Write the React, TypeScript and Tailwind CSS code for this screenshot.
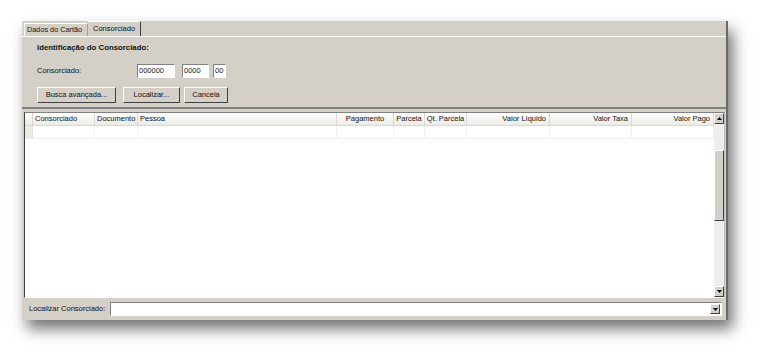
import React from "react";

type Col = { label: string; w: number; align: "left" | "center" | "right" };

const COLS: Col[] = [
  { label: "Consorciado", w: 62, align: "left" },
  { label: "Documento", w: 43, align: "left" },
  { label: "Pessoa", w: 199, align: "left" },
  { label: "Pagamento", w: 57, align: "center" },
  { label: "Parcela", w: 31, align: "center" },
  { label: "Qt. Parcela", w: 42, align: "center" },
  { label: "Valor Líquido", w: 83, align: "right" },
  { label: "Valor Taxa", w: 82, align: "right" },
  { label: "Valor Pago", w: 82, align: "right" },
];

const alignCls = {
  left: "justify-start pl-[2px]",
  center: "justify-center",
  right: "justify-end pr-[3px]",
};

const raised =
  "border border-t-white border-l-white border-r-[#404040] border-b-[#404040] bg-[#d4d0c8]";
const sunken =
  "border border-t-[#808080] border-l-[#808080] border-r-white border-b-white bg-white";

function Arrow({ up }: { up?: boolean }) {
  return (
    <svg width="5" height="3" viewBox="0 0 5 3">
      <path d={up ? "M0 3 L2.5 0 L5 3 Z" : "M0 0 L5 0 L2.5 3 Z"} fill="#000" />
    </svg>
  );
}

function Field({ value, w }: { value: string; w: number }) {
  return (
    <div
      className={`${sunken} h-[14px] flex items-center pl-[1px] text-[7.5px] leading-none`}
      style={{ width: w }}
    >
      {value}
    </div>
  );
}

function Btn({ label, w }: { label: string; w: number }) {
  return (
    <div
      className={`${raised} h-[16px] flex items-center justify-center text-[7.5px] leading-none`}
      style={{ width: w }}
    >
      {label}
    </div>
  );
}

export default function App() {
  return (
    <div
      className="w-[771px] h-[362px] bg-white pl-[22px] pt-[21px] text-[#111]"
      style={{ fontFamily: '"Liberation Sans", Arial, sans-serif' }}
    >
      <div className="w-[706px] h-[299px] bg-[#d4d0c8] flex flex-col border-r-2 border-r-[#6a6a6a] shadow-[5px_9px_14px_rgba(0,0,0,0.55)]">
        {/* tabs */}
        <div className="h-[15px] flex items-end pl-[2px]">
          <div className="w-[64px] h-[13px] border-t border-l border-white border-r border-r-[#a0a0a0] flex items-center pl-[2px] text-[7.3px] leading-none whitespace-nowrap">
            Dados do Cartão
          </div>
          <div className="w-[53px] h-[15px] border-t border-white border-r border-r-[#404040] flex items-center pl-[5px] text-[7.5px] leading-none">
            Consorciado
          </div>
        </div>

        {/* identification panel */}
        <div className="h-[73px] border-t border-white border-b-2 border-b-[#808080] pl-[15px] flex flex-col">
          <div className="mt-[6px] h-[10px] flex items-center font-bold text-[7.8px] leading-none">
            Identificação do Consorciado:
          </div>
          <div className="mt-[11px] flex items-center h-[14px]">
            <div className="w-[100px] text-[7.5px] leading-none">Consorciado:</div>
            <Field value="000000" w={38} />
            <div className="w-[7px]" />
            <Field value="0000" w={27} />
            <div className="w-[4px]" />
            <Field value="00" w={13} />
          </div>
          <div className="mt-[9px] flex items-center gap-[7px]">
            <Btn label="Busca avançada..." w={79} />
            <Btn label="Localizar..." w={57} />
            <div className="-ml-[3px]">
              <Btn label="Cancela" w={44} />
            </div>
          </div>
        </div>

        {/* grid */}
        <div className="mt-[3px] ml-[2px] mr-[1px] h-[186px] border border-t-[#808080] border-l-[#404040] border-r-[#c0c0c0] border-b-white bg-white flex">
          <div className="flex-1 flex flex-col">
            <div className="h-[13px] flex bg-gradient-to-b from-white to-[#ecebe6] border-b border-[#d8d8d0]">
              <div className="w-[8px] border-r border-[#d8d8d0]" />
              {COLS.map((c) => (
                <div
                  key={c.label}
                  className={`flex items-center ${alignCls[c.align]} border-r border-[#d8d8d0] text-[7.5px] leading-none whitespace-nowrap`}
                  style={{ width: c.w }}
                >
                  {c.label}
                </div>
              ))}
            </div>
            <div className="h-[13px] flex border-b border-[#f0f0f0]">
              <div className="w-[8px] bg-[#ecebe6] border-r border-[#e0e0e0]" />
              {COLS.map((c) => (
                <div key={c.label} className="border-r border-[#f0f0f0]" style={{ width: c.w }} />
              ))}
            </div>
          </div>
          {/* scrollbar */}
          <div className="w-[11px] flex flex-col bg-[#efeeea]">
            <div className={`${raised} h-[11px] flex items-center justify-center`}>
              <Arrow up />
            </div>
            <div className="h-[26px]" />
            <div className={`${raised} h-[71px]`} />
            <div className="flex-1" />
            <div className={`${raised} h-[11px] flex items-center justify-center`}>
              <Arrow />
            </div>
          </div>
        </div>

        {/* bottom search */}
        <div className="flex-1 flex items-center pl-[7px] pr-[4px]">
          <div className="w-[81px] text-[7.5px] leading-none">Localizar Consorciado:</div>
          <div className={`${sunken} flex-1 h-[14px] flex justify-end items-center pr-[1px]`}>
            <div className={`${raised} w-[10px] h-[10px] flex items-center justify-center`}>
              <Arrow />
            </div>
          </div>
        </div>
      </div>
    </div>
  );
}
